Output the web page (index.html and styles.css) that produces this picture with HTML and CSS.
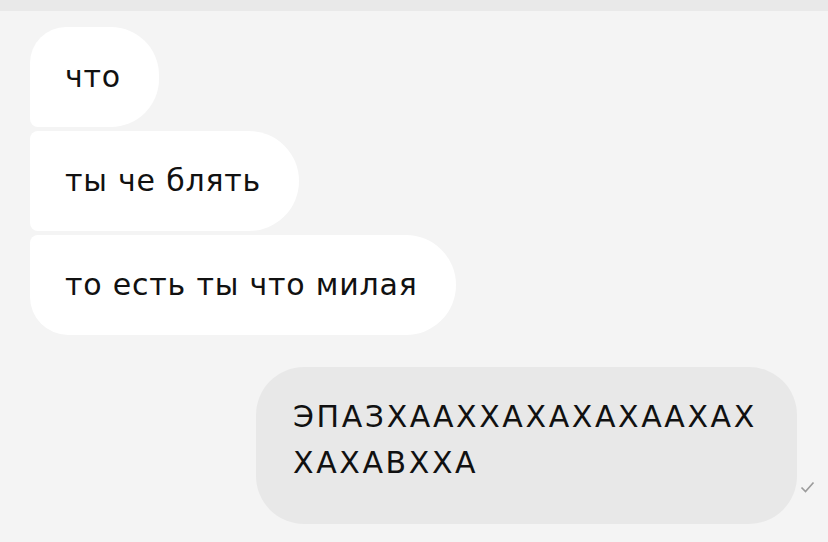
FILE: index.html
```html
<!DOCTYPE html>
<html>
<head>
  <meta charset="utf-8">
  <title>Чат</title>
  <link rel="stylesheet" href="styles.css">
</head>
<body>
  <div class="topbar"></div>

  <div class="chat">
    <div class="group incoming">
      <div class="bubble first">что</div>
      <div class="bubble middle">ты че блять</div>
      <div class="bubble last">то есть ты что милая</div>
    </div>

    <div class="group outgoing">
      <div class="row">
        <div class="bubble single">ЭПАЗХААХХАХАХАХААХАХХАХАВХХА</div>
        <svg class="check" width="15" height="12" viewBox="0 0 15 12">
          <path d="M1.5 6.5 L5.5 10.5 L13.5 1.5" fill="none" stroke="#9c9c9c" stroke-width="1.7"/>
        </svg>
      </div>
    </div>
  </div>
</body>
</html>
```

FILE: styles.css
```css
body {
  margin: 0;
  padding: 0;
  background-color: #f4f4f4;
  font-family: "DejaVu Sans", sans-serif;
  color: #111;
}

.topbar {
  height: 11px;
  background-color: #e9e9e9;
}

.chat {
  padding: 16px 13px 0 30px;
}

.group {
  display: flex;
  flex-direction: column;
  gap: 4px;
}

.incoming {
  align-items: flex-start;
}

.outgoing {
  align-items: flex-end;
  margin-top: 32px;
}

.bubble {
  font-size: 30px;
  line-height: 46px;
  letter-spacing: 0.8px;
  padding: 27px 38px 27px 35px;
  background-color: #fff;
  border-radius: 46px;
}

/* grouped incoming messages share a tight left edge */
.bubble.first {
  border-radius: 36px 48px 48px 8px;
}

.bubble.middle {
  border-radius: 8px 50px 50px 8px;
}

.bubble.last {
  border-radius: 8px 50px 50px 38px;
}

.row {
  display: flex;
  align-items: flex-end;
}

.outgoing .bubble {
  background-color: #e8e8e8;
  max-width: 466px;
  padding: 27px 38px 38px 37px;
  letter-spacing: 2.6px;
  word-break: break-all;
  border-radius: 48px;
}

.check {
  margin: 0 0 31px 3px;
}
```
